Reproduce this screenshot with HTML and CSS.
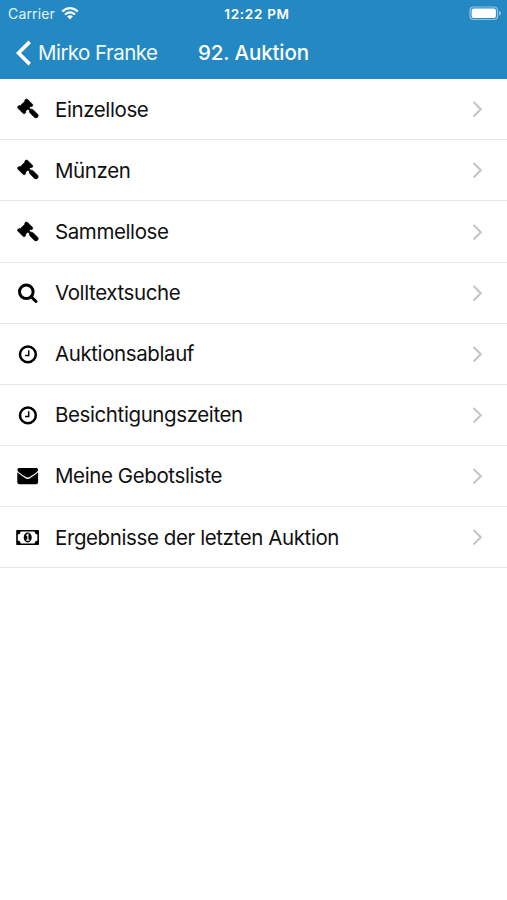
FILE: index.html
```html
<!DOCTYPE html>
<html lang="de">
<head>
<meta charset="utf-8">
<title>92. Auktion</title>
<link rel="stylesheet" href="styles.css">
</head>
<body>
<svg width="0" height="0" class="defs">
  <symbol id="gavel" viewBox="0 0 24 24"><path stroke="currentColor" stroke-width=".7" stroke-linejoin="round" d="M9.8 2.1 11.4 2.2 16.6 7.4 16.7 8.9 15.2 9.7 14.3 9.5 13.2 10.7 14.8 12.2Q16.2 11.9 17.3 12.9L21.8 17.4Q22.8 18.9 21.5 20.3 20 21.4 18.5 20.4L14.2 16.1Q13.2 15 13.4 13.4L11.9 12 9.6 14.2 9.8 15.1 8.9 16.6 7.3 16.6 1.8 11 1.7 9.5 3.2 8.6 4.3 8.7 8.9 4.2 8.8 3.2Z"/></symbol>
  <symbol id="search" viewBox="0 0 24 24"><g fill="none" stroke="currentColor" stroke-width="3"><circle cx="10.3" cy="10.8" r="6.8"/><path d="M15.4 15.9 20 20.5" stroke-linecap="round"/></g></symbol>
  <symbol id="clock" viewBox="0 0 24 24"><circle cx="11.9" cy="12.4" r="7.9" fill="none" stroke="currentColor" stroke-width="2.5"/><path d="M12.7 8.2V13.4H9" fill="none" stroke="currentColor" stroke-width="1.5"/></symbol>
  <symbol id="mail" viewBox="0 0 24 24"><path d="M1.3 5.8Q1.3 4 3.1 4H20.3Q22.1 4 22.1 5.8C21.8 8 18.2 10.2 14.4 12.5Q11.7 14.3 9 12.5C5 10 1.7 8 1.3 5.8Z"/><path d="M1.3 8.3C3.6 10.5 6.4 12.1 9 14Q11.7 15.9 14.4 14C17.1 12.1 20 10.5 22.1 8.3V18.3Q22.1 20.3 20.1 20.3H3.3Q1.3 20.3 1.3 18.3Z"/></symbol>
  <symbol id="money" viewBox="0 0 24 24"><path fill-rule="evenodd" d="M1 4.9H22.2Q23 4.9 23 5.7V19.2Q23 20 22.2 20H1Q.2 20 .2 19.2V5.7Q.2 4.9 1 4.9ZM4.7 6.5Q4.5 9.1 1.8 9.4V15.5Q4.5 15.8 4.7 18.4H18.5Q18.8 15.8 21.4 15.5V9.4Q18.8 9.1 18.5 6.5Z"/><ellipse cx="11.7" cy="12.5" rx="4" ry="5"/><path d="M10.3 10.6 11.9 9.5V14.8M10.2 15.1H13.5" fill="none" stroke="#fff" stroke-width="1.2"/></symbol>
  <symbol id="chevron" viewBox="0 0 12 18"><path d="M1.5 2 8.8 9.2 1.5 16.4" fill="none" stroke="#c5c5c8" stroke-width="2.1"/></symbol>
</svg>
<header class="header">
  <div class="status">
    <div class="network"><span class="carrier">Carrier</span>
      <svg class="wifi" viewBox="0 0 18 13"><g fill="none" stroke="#fff" stroke-width="2.2"><path d="M1.2 4.4Q9-2 16.8 4.4"/><path d="M4 7.5Q9 3.4 14 7.5"/></g><path d="M6.1 9.3Q9 7.3 11.9 9.3L9 12.4Z" fill="#fff"/></svg>
    </div>
    <span class="time">12:22 PM</span>
    <svg class="battery" viewBox="0 0 33 15"><rect x="1" y="1" width="27.5" height="12.5" rx="3.5" fill="none" stroke="#8fc3e2" stroke-width="1.2"/><rect x="2.6" y="2.6" width="24.3" height="9.3" rx="2" fill="#fff"/><path d="M30 5Q32 5.6 32 7.3T30 9.6Z" fill="#8fc3e2"/></svg>
  </div>
  <nav class="nav">
    <a class="back"><svg class="back-icon" viewBox="0 0 16 26"><path d="M13.7 1.9 2.5 13 13.7 24.1" fill="none" stroke="#fff" stroke-width="3.6"/></svg><span class="back-label">Mirko Franke</span></a>
    <h1 class="title">92. Auktion</h1>
  </nav>
</header>
<main class="list">
  <a class="row"><svg class="icon"><use href="#gavel"/></svg><span class="label">Einzellose</span><svg class="chevron"><use href="#chevron"/></svg></a>
  <a class="row"><svg class="icon"><use href="#gavel"/></svg><span class="label">Münzen</span><svg class="chevron"><use href="#chevron"/></svg></a>
  <a class="row"><svg class="icon"><use href="#gavel"/></svg><span class="label">Sammellose</span><svg class="chevron"><use href="#chevron"/></svg></a>
  <a class="row"><svg class="icon"><use href="#search"/></svg><span class="label">Volltextsuche</span><svg class="chevron"><use href="#chevron"/></svg></a>
  <a class="row"><svg class="icon"><use href="#clock"/></svg><span class="label">Auktionsablauf</span><svg class="chevron"><use href="#chevron"/></svg></a>
  <a class="row"><svg class="icon"><use href="#clock"/></svg><span class="label">Besichtigungszeiten</span><svg class="chevron"><use href="#chevron"/></svg></a>
  <a class="row"><svg class="icon"><use href="#mail"/></svg><span class="label">Meine Gebotsliste</span><svg class="chevron"><use href="#chevron"/></svg></a>
  <a class="row"><svg class="icon"><use href="#money"/></svg><span class="label">Ergebnisse der letzten Auktion</span><svg class="chevron"><use href="#chevron"/></svg></a>
</main>
</body>
</html>
```
FILE: styles.css
```css
* { box-sizing: border-box; }
body { margin: 0; background: #fff; color: #111; font-family: Inter, "Liberation Sans", sans-serif; }
.defs { display: block; }
.header { height: 79.3px; background: #2489c2; color: #fff; }
.status { display: grid; grid-template-columns: 1fr auto 1fr; align-items: center; height: 27px; padding: 0 5px 0 8px; font-size: 14px; }
.network { display: flex; align-items: center; gap: 6px; }
.carrier { color: #e4f4fc; letter-spacing: .15px; }
.wifi { width: 18px; height: 13px; }
.time { font-weight: 600; font-size: 13.5px; letter-spacing: .7px; margin-left: 4px; }
.battery { width: 33px; height: 15px; justify-self: end; }
.nav { display: flex; align-items: center; height: 51px; padding-left: 16px; }
.back { display: flex; align-items: center; width: 182px; gap: 6px; }
.back-icon { width: 16px; height: 26px; }
.back-label { font-size: 20.5px; letter-spacing: -.55px; white-space: nowrap; color: #f1fafe; }
.title { margin: 0; font-size: 20.5px; letter-spacing: -.12px; font-weight: 550; white-space: nowrap; }
.row { display: flex; align-items: center; height: 61.1px; padding: 0 23px 0 16px; border-bottom: 1px solid #e8e8ea; }
.icon { width: 24px; height: 24px; margin-right: 15px; fill: currentColor; color: #000; }
.label { flex: 1; font-size: 20.5px; letter-spacing: -.4px; white-space: nowrap; }
.chevron { width: 12px; height: 18px; }
```
